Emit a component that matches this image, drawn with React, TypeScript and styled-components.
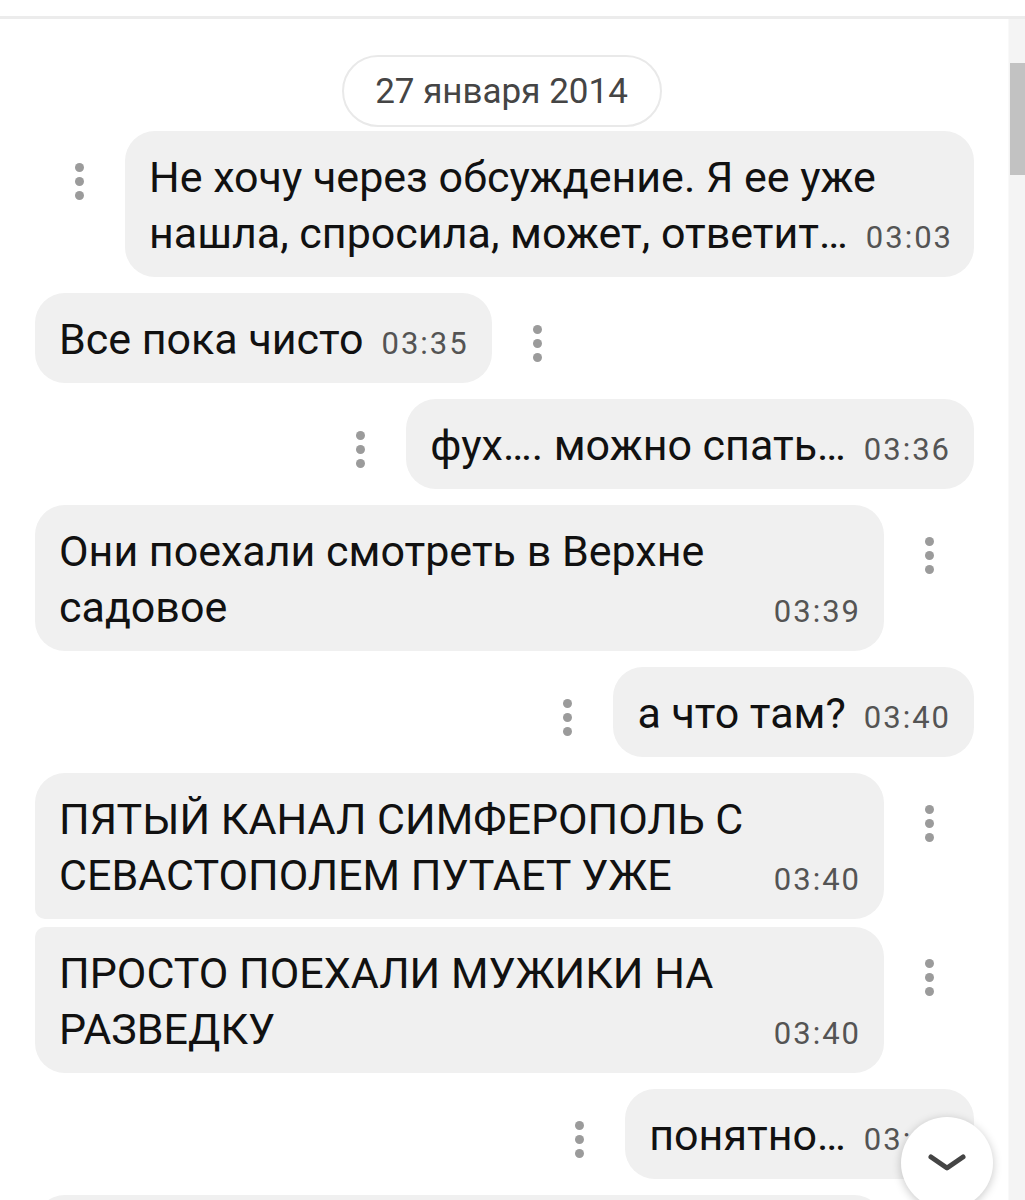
import React from 'react'
import styled, { createGlobalStyle } from 'styled-components'

interface Message {
  lines: string[]
  time: string
  out?: boolean
  wide?: boolean
  joinedTop?: boolean
  joinedBottom?: boolean
}

// last entry is the next bubble, only its top edge shows under the fold
const Messages: Message[] = [
  {
    lines: ['Не хочу через обсуждение. Я ее уже', 'нашла, спросила, может, ответит…'],
    time: '03:03',
    out: true,
    wide: true
  },
  { lines: ['Все пока чисто'], time: '03:35' },
  { lines: ['фух…. можно спать…'], time: '03:36', out: true },
  {
    lines: ['Они поехали смотреть в Верхне', 'садовое'],
    time: '03:39',
    wide: true
  },
  { lines: ['а что там?'], time: '03:40', out: true },
  {
    lines: ['ПЯТЫЙ КАНАЛ СИМФЕРОПОЛЬ С', 'СЕВАСТОПОЛЕМ ПУТАЕТ УЖЕ'],
    time: '03:40',
    wide: true,
    joinedBottom: true
  },
  {
    lines: ['ПРОСТО ПОЕХАЛИ МУЖИКИ НА', 'РАЗВЕДКУ'],
    time: '03:40',
    wide: true,
    joinedTop: true
  },
  { lines: ['понятно…'], time: '03:41', out: true },
  { lines: [], time: '', wide: true }
]

const GlobalStyle = createGlobalStyle`
  html, body {
    margin: 0;
    padding: 0;
    background: #ffffff;
  }
  body {
    font-family: Roboto, "Noto Sans", "DejaVu Sans", sans-serif;
  }
`

const Dots = () => (
  <DotsButton>
    <Dot />
    <Dot />
    <Dot />
  </DotsButton>
)

const App = () => {
  return (
    <Page>
      <GlobalStyle />
      <Header />
      <Body>
        <Feed>
          <DatePill>27 января 2014</DatePill>
          {Messages.map((m, index) => (
            <Row
              key={index}
              $out={!!m.out}
              $gap={index === 0 ? 4 : m.joinedTop ? 8 : 16}
            >
              {m.out && <Dots />}
              <Bubble
                $wide={!!m.wide}
                $joinedTop={!!m.joinedTop}
                $joinedBottom={!!m.joinedBottom}
              >
                {m.lines.map((line, i) =>
                  i === m.lines.length - 1 ? (
                    <LastLine key={i}>
                      <span>{line}</span>
                      <Time>{m.time}</Time>
                    </LastLine>
                  ) : (
                    <Line key={i}>{line}</Line>
                  )
                )}
              </Bubble>
              {!m.out && m.lines.length > 0 && <Dots />}
            </Row>
          ))}
        </Feed>
        <ScrollTrack>
          <ScrollThumb />
        </ScrollTrack>
      </Body>
      <DownButton>
        <svg width="38" height="20" viewBox="0 0 38 20" fill="none">
          <path
            d="M3 4 L19 15 L35 4"
            stroke="#444444"
            strokeWidth="5"
            strokeLinecap="round"
            strokeLinejoin="round"
          />
        </svg>
      </DownButton>
    </Page>
  )
}

const Page = styled.div`
  position: relative;
  width: 1025px;
  height: 1200px;
  overflow: hidden;
  background: #ffffff;
  display: flex;
  flex-direction: column;
`

const Header = styled.div`
  height: 16px;
  flex-shrink: 0;
  background: #ffffff;
  border-bottom: 3px solid #ececec;
`

const Body = styled.div`
  flex: 1;
  display: flex;
  flex-direction: row;
  min-height: 0;
`

const Feed = styled.div`
  flex: 1;
  display: flex;
  flex-direction: column;
  padding: 36px 34px 0 35px;
  overflow: hidden;
`

const DatePill = styled.div`
  align-self: center;
  box-sizing: border-box;
  width: 320px;
  height: 72px;
  margin-left: -6px;
  border: 2px solid #e9e9e9;
  border-radius: 36px;
  display: flex;
  align-items: center;
  justify-content: center;
  font-family: Roboto, sans-serif;
  font-size: 35px;
  color: #454545;
  flex-shrink: 0;
`

const Row = styled.div<{ $out: boolean; $gap: number }>`
  display: flex;
  flex-direction: row;
  align-items: flex-start;
  justify-content: ${(p) => (p.$out ? 'flex-end' : 'flex-start')};
  gap: 41px;
  margin-top: ${(p) => p.$gap}px;
  flex-shrink: 0;
`

const Bubble = styled.div<{
  $wide: boolean
  $joinedTop: boolean
  $joinedBottom: boolean
}>`
  box-sizing: border-box;
  width: ${(p) => (p.$wide ? '849px' : 'auto')};
  min-height: 90px;
  padding: 18px 23px 16px 24px;
  background: #f0f0f0;
  border-radius: 30px;
  ${(p) => p.$joinedTop && 'border-top-left-radius: 10px;'}
  ${(p) => p.$joinedBottom && 'border-bottom-left-radius: 10px;'}
  font-family: Roboto, "Noto Sans", sans-serif;
  font-size: 43px;
  line-height: 56px;
  color: #111111;
`

const Line = styled.div`
  white-space: nowrap;
  height: 56px;
`

const LastLine = styled.div`
  display: flex;
  flex-direction: row;
  align-items: baseline;
  justify-content: space-between;
  gap: 18px;
  height: 56px;
  white-space: nowrap;
`

const Time = styled.span`
  font-family: Roboto, sans-serif;
  font-size: 31px;
  line-height: 31px;
  letter-spacing: 2px;
  color: #545454;
`

const DotsButton = styled.div`
  display: flex;
  flex-direction: column;
  gap: 5px;
  margin-top: 32px;
  width: 9px;
  flex-shrink: 0;
`

const Dot = styled.span`
  width: 9px;
  height: 9px;
  border-radius: 50%;
  background: #9b9b9b;
`

const ScrollTrack = styled.div`
  width: 16px;
  flex-shrink: 0;
  background: #f4f4f4;
  border-left: 1px solid #f9f9f9;
  display: flex;
  flex-direction: column;
`

const ScrollThumb = styled.div`
  margin-top: 44px;
  height: 112px;
  margin-left: 1px;
  background: #c2c2c2;
`

const DownButton = styled.div`
  position: absolute;
  left: 901px;
  top: 1117px;
  width: 92px;
  height: 92px;
  border-radius: 50%;
  background: #ffffff;
  box-shadow: 0 2px 10px rgba(0, 0, 0, 0.22);
  display: flex;
  align-items: center;
  justify-content: center;
`

export default App
